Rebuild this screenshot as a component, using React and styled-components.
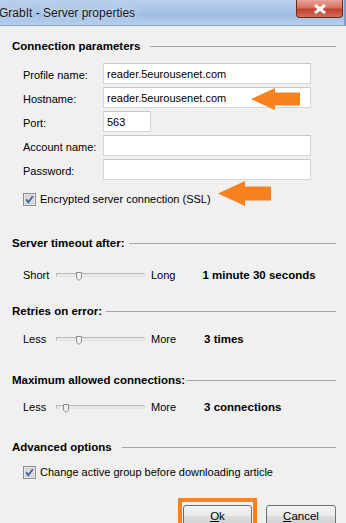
import React from 'react';
import styled, { createGlobalStyle } from 'styled-components';

const GlobalStyle = createGlobalStyle`
  html, body {
    margin: 0;
    padding: 0;
    background: #f0f0f0;
  }
  body {
    font-family: "Liberation Sans", Arial, sans-serif;
    font-size: 11px;
    color: #000;
  }
`;

const Window = styled.div`
  width: 346px;
  height: 523px;
  overflow: hidden;
  display: flex;
  flex-direction: column;
  background: #f0f0f0;
  position: relative;
`;

const TitleBar = styled.div`
  height: 25px;
  flex: none;
  display: flex;
  align-items: flex-start;
  justify-content: space-between;
  background: linear-gradient(180deg, #b9d1ec 0%, #a7c3e6 45%, #9dbce3 55%, #b6cfec 100%);
  border-bottom: 1px solid #8aa7cf;
  border-right: 2px solid #7f9cc6;
`;

const TitleText = styled.div`
  font-family: "Liberation Sans", Arial, sans-serif;
  font-size: 12px;
  line-height: 26px;
  margin-left: -1px;
  color: #1a1a1a;
  text-shadow: 0 0 6px rgba(255, 255, 255, 0.9);
`;

const CloseButton = styled.div`
  width: 45px;
  height: 17px;
  margin-right: 1px;
  border: 1px solid #6b2a22;
  border-top: none;
  border-radius: 0 0 4px 4px;
  background: linear-gradient(180deg, #e8a597 0%, #d47262 45%, #c2402c 55%, #d1705c 100%);
  display: flex;
  align-items: center;
  justify-content: center;
`;

const Body = styled.div`
  flex: 1;
  display: flex;
  flex-direction: column;
  padding: 0 10px 0 12px;
`;

const SectionHead = styled.div`
  display: flex;
  align-items: center;
  height: 16px;
  margin-top: ${(p) => p.$top}px;
  font-weight: bold;
  font-size: 11.5px;
  gap: ${(p) => p.$gap || 8}px;
  &::after {
    content: '';
    flex: 1;
    height: 1px;
    background: #a5a5a5;
  }
`;

const FormGrid = styled.div`
  display: grid;
  grid-template-columns: 80px 208px;
  row-gap: 3px;
  margin: 9px 0 0 11px;
  position: relative;
`;

const Label = styled.div`
  display: flex;
  align-items: center;
  height: 21px;
  padding-top: 2px;
  box-sizing: border-box;
`;

const Field = styled.div`
  height: 21px;
  width: ${(p) => p.$width || 208}px;
  box-sizing: border-box;
  background: #fff;
  border: 1px solid #d6d6d6;
  border-top-color: #c8c8c8;
  display: flex;
  align-items: center;
  padding-left: 3px;
  font-size: 11px;
`;

const CheckRow = styled.div`
  display: flex;
  align-items: center;
  gap: 4px;
  height: 14px;
  margin: ${(p) => p.$top}px 0 0 11px;
  font-size: 11px;
  position: relative;
`;

const SliderRow = styled.div`
  display: flex;
  align-items: center;
  height: 16px;
  margin: ${(p) => p.$top}px 0 0 11px;
  font-size: 11px;
`;

const SliderLabel = styled.div`
  width: 33px;
`;

const Track = styled.div`
  width: 89px;
  height: 4px;
  box-sizing: border-box;
  border: 1px solid #b9b9b9;
  border-bottom-color: #e6e6e6;
  border-right-color: #e6e6e6;
  background: #e7eaea;
  position: relative;
  margin-right: 6px;
`;

const Thumb = styled.div`
  position: absolute;
  top: -3px;
  left: ${(p) => p.$pos}px;
  width: 5px;
  height: 8px;
`;

const Value = styled.div`
  font-weight: bold;
  font-size: 11.5px;
  margin-left: ${(p) => p.$gap}px;
`;

const Buttons = styled.div`
  display: flex;
  justify-content: flex-end;
  align-items: flex-start;
  gap: 9px;
  margin-top: 19px;
`;

const Marker = styled.div`
  border: 4px solid #f7811f;
  padding: 3px 1px 0 1px;
  border-bottom: none;
`;

const Button = styled.div`
  width: ${(p) => p.$width}px;
  height: 22px;
  box-sizing: border-box;
  border: 1px solid #707070;
  border-radius: 3px;
  background: linear-gradient(180deg, #f2f2f2 0%, #ebebeb 48%, #dddddd 52%, #cfcfcf 100%);
  display: flex;
  align-items: center;
  justify-content: center;
  font-size: 11.5px;
  margin-top: ${(p) => p.$top || 0}px;
  u {
    text-decoration: underline;
  }
`;

const Arrow = styled.svg`
  position: absolute;
  left: ${(p) => p.$x}px;
  top: ${(p) => p.$y}px;
`;

const Checkbox = () => (
  <svg width="13" height="13" viewBox="0 0 13 13">
    <rect x="0.5" y="0.5" width="12" height="12" fill="#f4f4f4" stroke="#8f8f8f" />
    <rect x="2" y="2" width="9" height="9" fill="#dcdcdc" stroke="#b9b9b9" strokeWidth="0.5" />
    <path d="M3.2 6.2 L5.3 9.2 L9.8 3.2" fill="none" stroke="#3a5fa8" strokeWidth="1.8" />
  </svg>
);

const SliderThumb = ({ pos }) => (
  <Thumb $pos={pos}>
    <svg width="6" height="9" viewBox="0 0 6 9">
      <path d="M0.5 0.5 H5.5 V6 L3 8.5 L0.5 6 Z" fill="#f3f3f3" stroke="#8c8c8c" />
    </svg>
  </Thumb>
);

const OrangeArrow = ({ x, y, w, h, head, shaft }) => (
  <Arrow $x={x} $y={y} width={w} height={h} viewBox={`0 0 ${w} ${h}`}>
    <path
      d={`M0 ${h / 2} L${head} 0 L${head} ${(h - shaft) / 2} L${w} ${(h - shaft) / 2} L${w} ${(h + shaft) / 2} L${head} ${(h + shaft) / 2} L${head} ${h} Z`}
      fill="#f7811f"
    />
  </Arrow>
);

function Slider({ left, right, pos, value, gap, top }) {
  return (
    <SliderRow $top={top}>
      <SliderLabel>{left}</SliderLabel>
      <Track>
        <SliderThumb pos={pos} />
      </Track>
      <span>{right}</span>
      <Value $gap={gap}>{value}</Value>
    </SliderRow>
  );
}

export default function App() {
  return (
    <>
      <GlobalStyle />
      <Window>
        <TitleBar>
          <TitleText>GrabIt - Server properties</TitleText>
          <CloseButton>
            <svg width="14" height="10" viewBox="0 0 14 10">
              <path d="M2 1 L12 9 M12 1 L2 9" stroke="#fff" strokeWidth="3" />
            </svg>
          </CloseButton>
        </TitleBar>
        <Body>
          <SectionHead $top={12} $gap={10}>Connection parameters</SectionHead>
          <FormGrid>
            <Label>Profile name:</Label>
            <Field>reader.5eurousenet.com</Field>
            <Label>Hostname:</Label>
            <Field>reader.5eurousenet.com</Field>
            <Label>Port:</Label>
            <Field $width={48}>563</Field>
            <Label>Account name:</Label>
            <Field />
            <Label>Password:</Label>
            <Field />
            <OrangeArrow x={228} y={25} w={49} h={22} head={24} shaft={13} />
          </FormGrid>
          <CheckRow $top={12}>
            <Checkbox />
            <span>Encrypted server connection (SSL)</span>
            <OrangeArrow x={195} y={-11} w={53} h={25} head={27} shaft={14} />
          </CheckRow>

          <SectionHead $top={29} $gap={5}>Server timeout after:</SectionHead>
          <Slider top={16} left="Short" right="Long" pos={19} gap={27} value="1 minute 30 seconds" />

          <SectionHead $top={20} $gap={4}>Retries on error:</SectionHead>
          <Slider top={12} left="Less" right="More" pos={19} gap={28} value="3 times" />

          <SectionHead $top={25} $gap={1}>Maximum allowed connections:</SectionHead>
          <Slider top={11} left="Less" right="More" pos={6} gap={28} value="3 connections" />

          <SectionHead $top={24} $gap={10}>Advanced options</SectionHead>
          <CheckRow $top={10}>
            <Checkbox />
            <span>Change active group before downloading article</span>
          </CheckRow>

          <Buttons>
            <Marker>
              <Button $width={69}>
                <span><u>O</u>k</span>
              </Button>
            </Marker>
            <Button $width={70} $top={7}>
              <span><u>C</u>ancel</span>
            </Button>
          </Buttons>
        </Body>
      </Window>
    </>
  );
}
